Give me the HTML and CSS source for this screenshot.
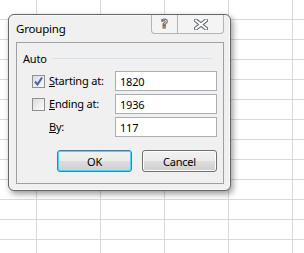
FILE: index.html
```html
<!DOCTYPE html>
<html lang="en">
<head>
  <meta charset="UTF-8">
  <meta name="viewport" content="width=device-width, initial-scale=1.0">
  <title>Grouping</title>
  <link rel="stylesheet" href="styles.css">
</head>
<body>
  <div class="dialog">
    <div class="titlebar">
      <span class="title">Grouping</span>
      <div class="caption-buttons">
        <div class="cap-btn help">?</div>
        <div class="cap-btn close">
          <svg width="14" height="11" viewBox="0 0 14 11">
            <path d="M2 1.5 L12 9.5 M12 1.5 L2 9.5" stroke="#5a5f69" stroke-width="4" stroke-linecap="square"/>
            <path d="M2 1.5 L12 9.5 M12 1.5 L2 9.5" stroke="#ffffff" stroke-width="2" stroke-linecap="square"/>
          </svg>
        </div>
      </div>
    </div>

    <div class="client">
      <div class="group-title">Auto</div>

      <div class="row">
        <span class="checkbox checked">
          <svg width="11" height="11" viewBox="0 0 11 11">
            <path d="M2 5.5 L4.5 8.5 L9 1.5" fill="none" stroke="#4a64a8" stroke-width="2"/>
          </svg>
        </span>
        <span class="label"><u>S</u>tarting at:</span>
        <input type="text" class="field" value="1820">
      </div>

      <div class="row">
        <span class="checkbox"></span>
        <span class="label"><u>E</u>nding at:</span>
        <input type="text" class="field" value="1936">
      </div>

      <div class="row">
        <span class="spacer"></span>
        <span class="label"><u>B</u>y:</span>
        <input type="text" class="field" value="117">
      </div>

      <div class="buttons">
        <button class="btn default">OK</button>
        <button class="btn">Cancel</button>
      </div>
    </div>
  </div>
</body>
</html>
```

FILE: styles.css
```css
body {
  margin: 0;
  padding: 0;
  width: 304px;
  height: 253px;
  overflow: hidden;
  font-family: "Noto Sans", Arial, sans-serif;
  font-size: 11px;
  letter-spacing: -0.2px;
  color: #000;
  background-color: #fff;
  background-image:
    linear-gradient(to right, #d9d9d9 1px, transparent 1px),
    linear-gradient(to bottom, #d9d9d9 1px, transparent 1px);
  background-size: 64px 100%, 100% 20px;
  background-position: 36px 0, 0 19px;
}

.dialog {
  box-sizing: border-box;
  width: 223px;
  height: 177px;
  margin: 14px 0 0 8px;
  padding: 0 6px 6px 7px;
  border: 1px solid #646464;
  border-radius: 6px;
  background-color: #f0f0f0;
  box-shadow: inset 0 0 0 1px #fafafa, 2px 3px 6px rgba(0, 0, 0, 0.4);
}

.titlebar {
  display: flex;
  justify-content: space-between;
  align-items: flex-start;
  height: 27px;
}

.title {
  margin-top: 6px;
  line-height: 16px;
  font-size: 11.5px;
}

.caption-buttons {
  display: flex;
  height: 19px;
}

.cap-btn {
  box-sizing: border-box;
  height: 19px;
  display: flex;
  justify-content: center;
  align-items: center;
  border: 1px solid #b4b4b4;
  border-top: none;
  background-color: #f4f4f4;
}

.help {
  width: 26px;
  border-right: none;
  border-bottom-left-radius: 4px;
  font-family: "DejaVu Sans", sans-serif;
  font-weight: bold;
  font-size: 12px;
  color: #fff;
  -webkit-text-stroke: 1px #5a5f69;
}

.close {
  width: 47px;
  border-bottom-right-radius: 4px;
}

.client {
  box-sizing: border-box;
  height: 142px;
  padding: 7px 6px 0 6px;
  border: 1px solid #a0a0a0;
  background-color: #f0f0f0;
}

.group-title {
  display: flex;
  align-items: center;
  gap: 5px;
  height: 16px;
  margin-bottom: 5px;
}

.group-title::after {
  content: "";
  flex: 1;
  margin-right: 5px;
  border-top: 1px solid #d5dfe5;
}

.row {
  display: flex;
  align-items: center;
  height: 20px;
  margin-bottom: 3px;
  padding-left: 9px;
}

.checkbox,
.spacer {
  box-sizing: border-box;
  width: 13px;
  height: 13px;
  flex: none;
}

.checkbox {
  display: flex;
  justify-content: center;
  align-items: center;
  border: 1px solid #8e8f8f;
  background: linear-gradient(135deg, #dcdcdc, #fcfcfc);
}

.label {
  width: 67px;
  margin-left: 4px;
  line-height: 16px;
}

.field {
  box-sizing: border-box;
  width: 102px;
  height: 20px;
  margin: 0;
  padding: 0 0 0 4px;
  border: 1px solid #abadb3;
  background-color: #fff;
  font-family: "Noto Sans", Arial, sans-serif;
  font-size: 11px;
  letter-spacing: -0.2px;
  color: #000;
}

.buttons {
  display: flex;
  justify-content: flex-end;
  gap: 10px;
  margin-top: 13px;
}

.btn {
  box-sizing: border-box;
  width: 75px;
  height: 22px;
  padding: 0;
  border: 1px solid #707070;
  border-radius: 3px;
  background: linear-gradient(to bottom, #f2f2f2 0%, #ebebeb 50%, #dddddd 51%, #cfcfcf 100%);
  box-shadow: inset 0 0 0 1px #fcfcfc;
  font-family: "Noto Sans", Arial, sans-serif;
  font-size: 11px;
  letter-spacing: -0.2px;
  color: #000;
}

.btn.default {
  border-color: #3c7fb1;
  box-shadow: inset 0 0 0 1px #48d8fb;
}
```
